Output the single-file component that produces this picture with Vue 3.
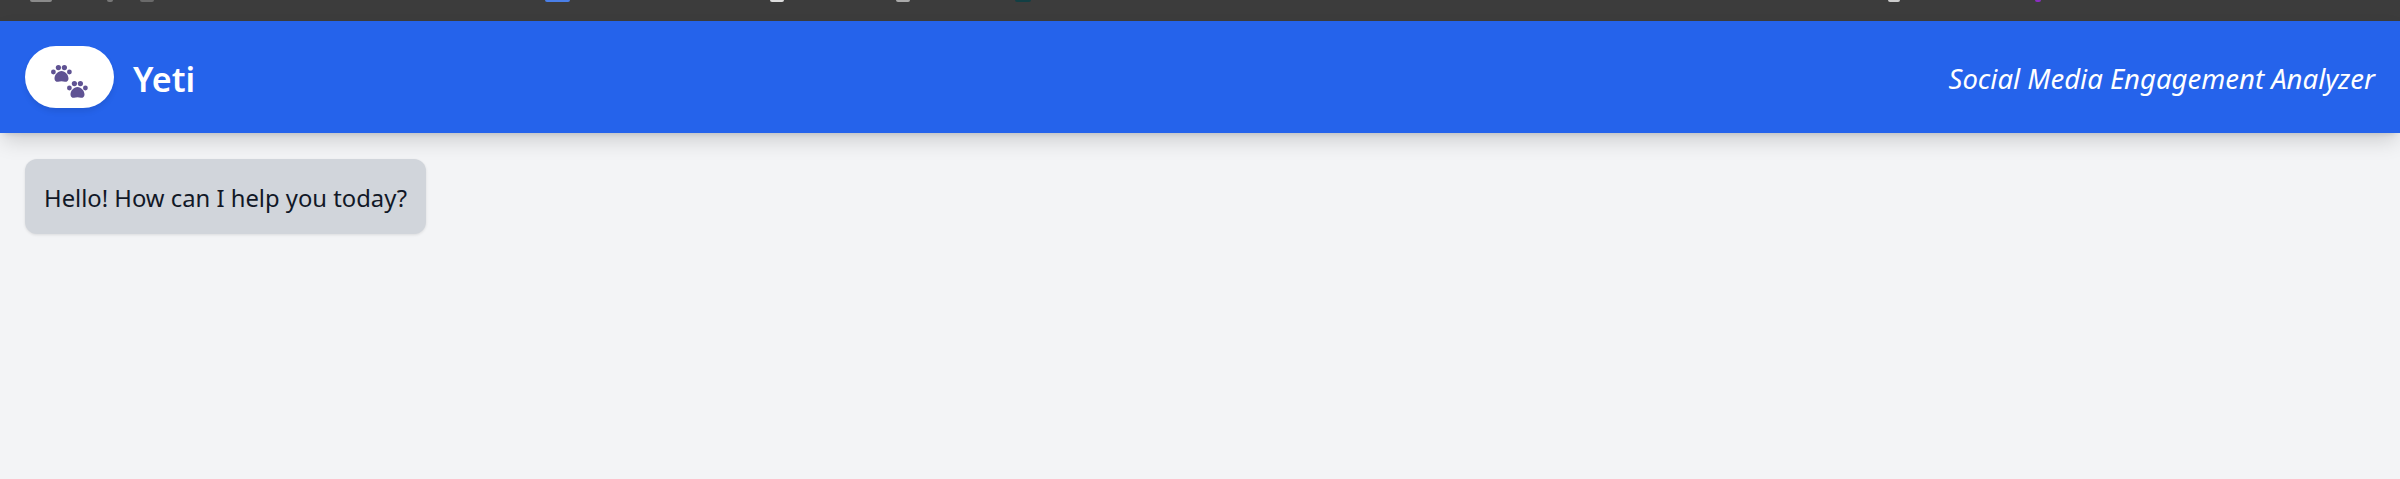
<template>
  <div class="page">
    <div class="topbar">
      <span
        v-for="mark in marks"
        :key="mark.gap"
        class="mark"
        :style="{ marginLeft: mark.gap + 'px', width: mark.width + 'px', background: mark.color }"
      ></span>
    </div>
    <header class="header">
      <div class="brand">
        <div class="logo">
          <svg width="37" height="33" viewBox="0 0 37 33" fill="#5f5293">
            <g v-for="paw in paws" :key="paw.x" :transform="`translate(${paw.x} ${paw.y})`">
              <circle cx="2.4" cy="7" r="2.4" />
              <circle cx="7.4" cy="2.6" r="2.6" />
              <circle cx="13.4" cy="2.6" r="2.6" />
              <circle cx="18.4" cy="7" r="2.4" />
              <path d="M10.500 6c3.800 0 7 4 7 7.500 0 2.500-1.800 3.500-3.500 3.300-1.300-.1-2.200-.6-3.500-.6s-2.200.5-3.500.6c-1.700.2-3.500-.8-3.500-3.300 0-3.500 3.200-7.500 7-7.500z" />
            </g>
          </svg>
        </div>
        <h1 class="title">Yeti</h1>
      </div>
      <p class="tagline">Social Media Engagement Analyzer</p>
    </header>
    <main class="chat">
      <div class="bubble">Hello! How can I help you today?</div>
    </main>
  </div>
</template>

<script setup>
const paws = [
  { x: 0, y: 0 },
  { x: 16, y: 16 },
];

// bits of the window above that are cut off by the top edge
const marks = [
  { gap: 30, width: 22, color: "#8a8a8a" },
  { gap: 55, width: 6, color: "#777" },
  { gap: 27, width: 14, color: "#6a6a6a" },
  { gap: 391, width: 25, color: "#4a7fe8" },
  { gap: 200, width: 14, color: "#ddd" },
  { gap: 112, width: 14, color: "#aaa" },
  { gap: 105, width: 16, color: "#123f44" },
  { gap: 857, width: 12, color: "#ccc" },
  { gap: 135, width: 6, color: "#8a2ec0" },
];
</script>

<style>
body {
  margin: 0;
  background: #f3f4f6;
}
</style>

<style scoped>
.page {
  min-height: 479px;
  background: #f3f4f6;
  font-family: "Noto Sans", "Open Sans", sans-serif;
  overflow: hidden;
}
.topbar {
  height: 21px;
  background: #3c3c3c;
  display: flex;
  align-items: flex-start;
}
.mark {
  height: 2px;
  flex: none;
  border-radius: 0 0 3px 3px;
  filter: blur(0.6px);
}
.header {
  height: 112px;
  box-sizing: border-box;
  padding: 0 25px;
  display: flex;
  align-items: center;
  justify-content: space-between;
  background: #2563eb;
  color: #fff;
  box-shadow: 0 10px 20px -3px rgba(0, 0, 0, 0.16), 0 4px 6px -4px rgba(0, 0, 0, 0.15);
}
.brand {
  display: flex;
  align-items: center;
  gap: 20px;
}
.logo {
  width: 89px;
  height: 62px;
  border-radius: 31px;
  background: #fff;
  display: flex;
  align-items: center;
  justify-content: center;
  box-shadow: 0 4px 6px -1px rgba(0, 0, 0, 0.1);
}
.logo svg {
  margin-top: 9px;
}
.title {
  margin: 0;
  padding-top: 3px;
  font-size: 34px;
  font-weight: 600;
  margin-left: -1px;
}
.tagline {
  margin: 0;
  padding-top: 2px;
  font-size: 27.5px;
  font-style: italic;
}
.chat {
  padding: 26px 25px;
}
.bubble {
  width: fit-content;
  padding: 21px 19px 17px;
  border-radius: 12px;
  background: #d1d5db;
  color: #111827;
  font-size: 23.8px;
  line-height: 37px;
  box-shadow: 0 1px 3px rgba(0, 0, 0, 0.1);
}
</style>
